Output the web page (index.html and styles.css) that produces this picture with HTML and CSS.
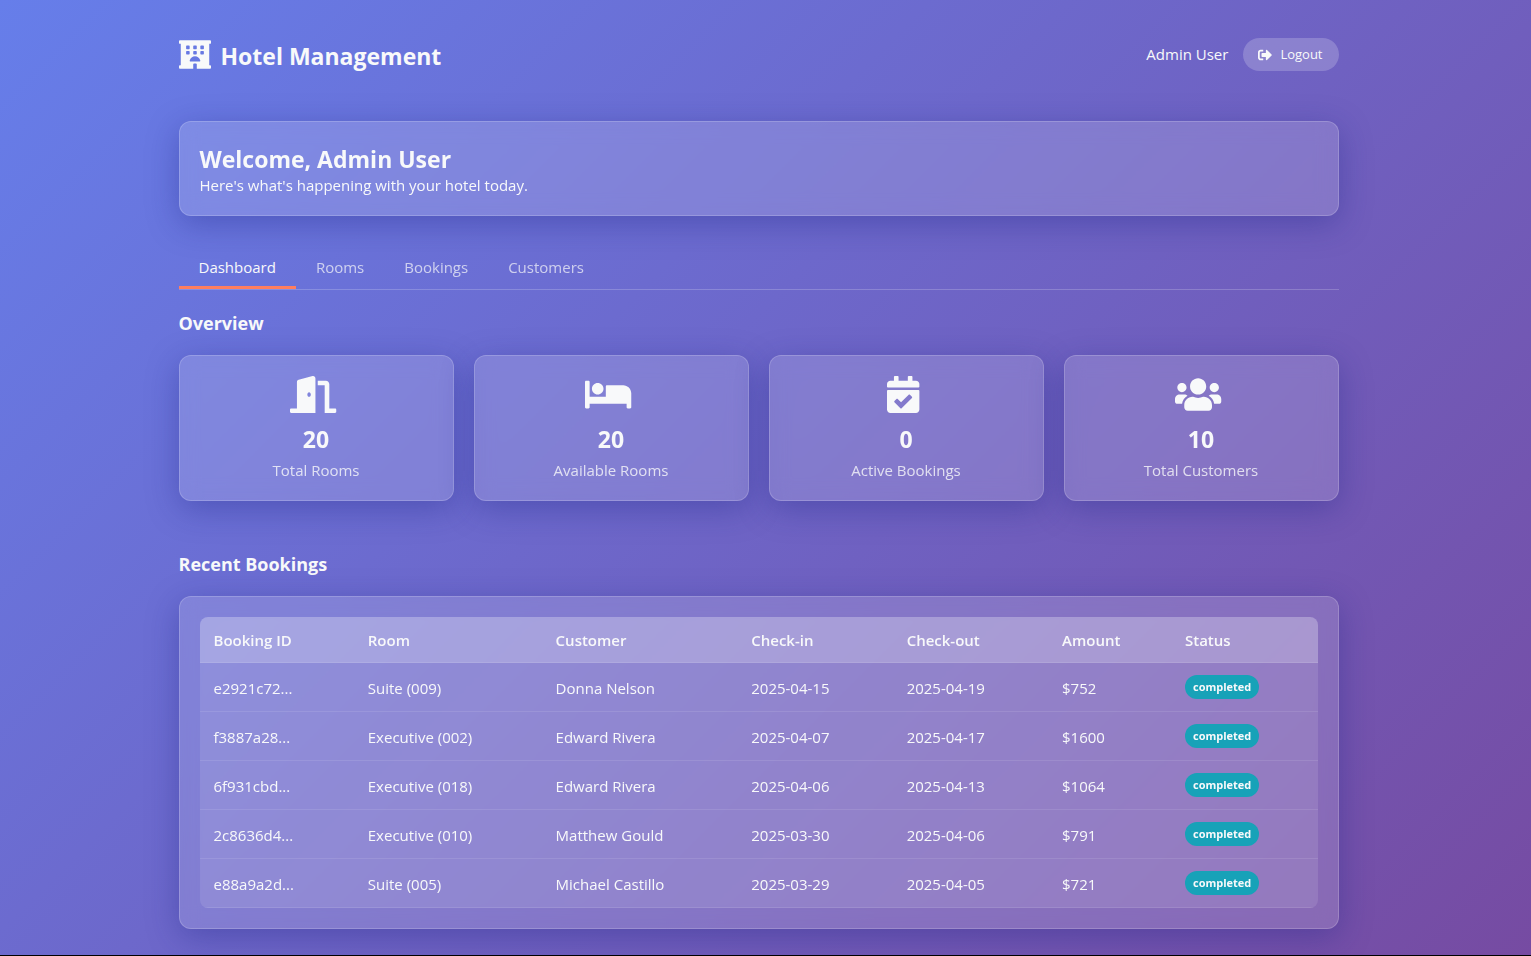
FILE: index.html
```
<!DOCTYPE html>
<html lang="en">
<head>
	<meta charset="UTF-8">
	<meta name="viewport" content="width=device-width, initial-scale=1.0">
	<title>Hotel Management</title>
	<link rel="stylesheet" href="styles.css">
</head>
<body>
<div class="container">
	<header class="header">
		<div class="logo">
			<svg viewBox="0 0 576 512" aria-hidden="true"><path fill-rule="evenodd" d="M560 64c8.84 0 16-7.16 16-16V16c0-8.84-7.16-16-16-16H16C7.16 0 0 7.16 0 16v32c0 8.84 7.16 16 16 16h16v384H16c-8.84 0-16 7.16-16 16v32c0 8.84 7.16 16 16 16h240v-80c0-8.8 7.2-16 16-16h32c8.8 0 16 7.2 16 16v80h240c8.84 0 16-7.16 16-16v-32c0-8.84-7.16-16-16-16h-16V64h16zM141 96h38q13 0 13 13v38q0 13-13 13h-38q-13 0-13-13v-38q0-13 13-13zM269 96h38q13 0 13 13v38q0 13-13 13h-38q-13 0-13-13v-38q0-13 13-13zM397 96h38q13 0 13 13v38q0 13-13 13h-38q-13 0-13-13v-38q0-13 13-13zM141 192h38q13 0 13 13v38q0 13-13 13h-38q-13 0-13-13v-38q0-13 13-13zM269 192h38q13 0 13 13v38q0 13-13 13h-38q-13 0-13-13v-38q0-13 13-13zM397 192h38q13 0 13 13v38q0 13-13 13h-38q-13 0-13-13v-38q0-13 13-13zM208 384c-10 0-18-9-15-19 11-44 50-77 95-77s84 33 95 77c3 10-5 19-15 19z"/></svg>
			<h1>Hotel Management</h1>
		</div>
		<div class="user-info">
			<span>Admin User</span>
			<button type="button" class="logout-btn">
				<svg viewBox="0 0 512 512" aria-hidden="true"><path d="M497 273L329 441c-15 15-41 4.5-41-17v-96H152c-13.3 0-24-10.7-24-24v-96c0-13.3 10.7-24 24-24h136V88c0-21.4 25.9-32 41-17l168 168c9.3 9.4 9.3 24.6 0 34zM192 436v-40c0-6.6-5.4-12-12-12H96c-17.7 0-32-14.3-32-32V160c0-17.7 14.3-32 32-32h84c6.6 0 12-5.4 12-12V76c0-6.6-5.4-12-12-12H96c-53 0-96 43-96 96v192c0 53 43 96 96 96h84c6.6 0 12-5.4 12-12z"/></svg>
				Logout
			</button>
		</div>
	</header>

	<section class="card welcome">
		<h2>Welcome, Admin User</h2>
		<p>Here's what's happening with your hotel today.</p>
	</section>

	<nav class="tabs">
		<button type="button" class="tab active">Dashboard</button>
		<button type="button" class="tab">Rooms</button>
		<button type="button" class="tab">Bookings</button>
		<button type="button" class="tab">Customers</button>
	</nav>

	<h3 class="section-title">Overview</h3>
	<div class="stats">
		<div class="card stat">
			<svg class="stat-icon" viewBox="0 0 640 512" aria-hidden="true"><path d="M624 448h-80V113.45C544 86.19 522.47 64 496 64H384v64h96v384h144c8.84 0 16-7.16 16-16v-32c0-8.84-7.16-16-16-16zM312.24 1.01l-192 49.74C105.99 54.44 96 67.7 96 82.92V448H16c-8.84 0-16 7.16-16 16v32c0 8.84 7.16 16 16 16h336V33.18c0-21.58-19.56-37.41-39.76-32.17zM264 288c-13.25 0-24-14.33-24-32s10.75-32 24-32 24 14.33 24 32-10.75 32-24 32z"/></svg>
			<div class="stat-value">20</div>
			<div class="stat-label">Total Rooms</div>
		</div>
		<div class="card stat">
			<svg class="stat-icon" viewBox="0 0 640 512" aria-hidden="true"><path d="M176 256c44.11 0 80-35.89 80-80s-35.89-80-80-80-80 35.89-80 80 35.89 80 80 80zm352-128H304c-8.84 0-16 7.16-16 16v144H64V80c0-8.84-7.16-16-16-16H16C7.16 64 0 71.16 0 80v352c0 8.84 7.16 16 16 16h32c8.84 0 16-7.16 16-16v-48h512v48c0 8.84 7.16 16 16 16h32c8.84 0 16-7.16 16-16V240c0-61.86-50.14-112-112-112z"/></svg>
			<div class="stat-value">20</div>
			<div class="stat-label">Available Rooms</div>
		</div>
		<div class="card stat">
			<svg class="stat-icon" viewBox="0 0 448 512" aria-hidden="true"><path d="M436 160H12c-6.627 0-12-5.373-12-12v-36c0-26.51 21.49-48 48-48h48V12c0-6.627 5.373-12 12-12h40c6.627 0 12 5.373 12 12v52h128V12c0-6.627 5.373-12 12-12h40c6.627 0 12 5.373 12 12v52h48c26.51 0 48 21.49 48 48v36c0 6.627-5.373 12-12 12zM12 192h424c6.627 0 12 5.373 12 12v260c0 26.51-21.49 48-48 48H48c-26.51 0-48-21.49-48-48V204c0-6.627 5.373-12 12-12zm333.296 95.947l-28.169-28.398c-4.667-4.705-12.265-4.736-16.97-.068L194.12 364.665l-45.98-46.352c-4.667-4.705-12.266-4.736-16.971-.068l-28.397 28.17c-4.705 4.667-4.736 12.265-.068 16.97l82.601 83.269c4.667 4.705 12.265 4.736 16.97.068l142.953-141.805c4.705-4.667 4.736-12.265.068-16.97z"/></svg>
			<div class="stat-value">0</div>
			<div class="stat-label">Active Bookings</div>
		</div>
		<div class="card stat">
			<svg class="stat-icon" viewBox="0 0 640 512" aria-hidden="true"><path d="M96 224c35.3 0 64-28.7 64-64s-28.7-64-64-64-64 28.7-64 64 28.7 64 64 64zm448 0c35.3 0 64-28.7 64-64s-28.7-64-64-64-64 28.7-64 64 28.7 64 64 64zm32 32h-64c-17.6 0-33.5 7.1-45.1 18.6 40.3 22.1 68.9 62 75.1 109.4h66c17.7 0 32-14.3 32-32v-32c0-35.3-28.7-64-64-64zm-256 0c61.9 0 112-50.1 112-112S381.9 32 320 32 208 82.1 208 144s50.1 112 112 112zm76.8 32h-8.3c-20.8 10-43.9 16-68.5 16s-47.6-6-68.5-16h-8.3C179.6 288 128 339.6 128 403.2V432c0 26.5 21.5 48 48 48h288c26.5 0 48-21.5 48-48v-28.8c0-63.6-51.6-115.2-115.2-115.2zm-223.7-13.4C161.5 263.1 145.6 256 128 256H64c-35.3 0-64 28.7-64 64v32c0 17.7 14.3 32 32 32h65.9c6.3-47.4 34.9-87.3 75.2-109.4z"/></svg>
			<div class="stat-value">10</div>
			<div class="stat-label">Total Customers</div>
		</div>
	</div>

	<h3 class="section-title">Recent Bookings</h3>
	<div class="card">
		<table class="bookings">
			<colgroup>
				<col class="col-id">
				<col class="col-room">
				<col class="col-customer">
				<col class="col-date">
				<col class="col-date">
				<col class="col-amount">
				<col>
			</colgroup>
			<thead>
				<tr><th>Booking ID</th><th>Room</th><th>Customer</th><th>Check-in</th><th>Check-out</th><th>Amount</th><th>Status</th></tr>
			</thead>
			<tbody>
				<tr><td>e2921c72...</td><td>Suite (009)</td><td>Donna Nelson</td><td>2025-04-15</td><td>2025-04-19</td><td>$752</td><td class="status"><span class="badge">completed</span></td></tr>
				<tr><td>f3887a28...</td><td>Executive (002)</td><td>Edward Rivera</td><td>2025-04-07</td><td>2025-04-17</td><td>$1600</td><td class="status"><span class="badge">completed</span></td></tr>
				<tr><td>6f931cbd...</td><td>Executive (018)</td><td>Edward Rivera</td><td>2025-04-06</td><td>2025-04-13</td><td>$1064</td><td class="status"><span class="badge">completed</span></td></tr>
				<tr><td>2c8636d4...</td><td>Executive (010)</td><td>Matthew Gould</td><td>2025-03-30</td><td>2025-04-06</td><td>$791</td><td class="status"><span class="badge">completed</span></td></tr>
				<tr><td>e88a9a2d...</td><td>Suite (005)</td><td>Michael Castillo</td><td>2025-03-29</td><td>2025-04-05</td><td>$721</td><td class="status"><span class="badge">completed</span></td></tr>
			</tbody>
		</table>
	</div>
</div>
</body>
</html>
```
FILE: styles.css
```
* {
	margin: 0;
	padding: 0;
	box-sizing: border-box;
}

html {
	background: #000;
}

body {
	font-family: "Segoe UI", "Open Sans", "Noto Sans", sans-serif;
	font-size: 15px;
	line-height: 21px;
	color: #f8f9fa;
	min-height: 100vh;
	padding-right: 14px;
	border-bottom: 1px solid #000;
	background: linear-gradient(135deg, #667eea 0%, #764ba2 100%) padding-box;
}

button {
	font-family: inherit;
	color: inherit;
	border: none;
	background: none;
	cursor: pointer;
}

svg {
	fill: currentColor;
}

.container {
	max-width: 1200px;
	margin: 0 auto;
	padding: 20px 20px 26px;
}

/* header */
.header {
	display: flex;
	justify-content: space-between;
	align-items: center;
	padding: 16px 0;
	margin-bottom: 32px;
}

.logo {
	display: flex;
	align-items: center;
	gap: 10px;
}

.logo svg {
	width: 32px;
	height: 29px;
}

.logo h1 {
	font-size: 23px;
	line-height: 33px;
	padding-top: 4px;
}

.user-info {
	display: flex;
	align-items: center;
	gap: 15px;
}

.logout-btn {
	display: flex;
	align-items: center;
	gap: 8px;
	padding: 6px 16px 6px 15px;
	border-radius: 20px;
	font-size: 13px;
	line-height: 21px;
	background: rgba(255, 255, 255, 0.2);
}

.logout-btn svg {
	width: 14px;
	height: 14px;
}

/* cards */
.card {
	padding: 20px;
	border: 1px solid rgba(255, 255, 255, 0.18);
	border-radius: 12px;
	background: rgba(255, 255, 255, 0.15);
	box-shadow: 0 8px 32px rgba(31, 38, 135, 0.37);
	backdrop-filter: blur(10px);
}

.welcome {
	padding: 21px 20px 19px;
	margin-bottom: 30px;
}

.welcome h2 {
	font-size: 23px;
	line-height: 32px;
}

/* tabs */
.tabs {
	display: flex;
	border-bottom: 1px solid rgba(255, 255, 255, 0.2);
	margin-bottom: 20px;
}

.tab {
	padding: 11px 20px 9px;
	font-size: 15px;
	line-height: 20px;
	opacity: 0.7;
	border-bottom: 3px solid transparent;
}

.tab.active {
	opacity: 1;
	border-bottom-color: #ff7e5f;
}

.section-title {
	font-size: 18px;
	line-height: 27px;
	margin-bottom: 18px;
}

/* overview */
.stats {
	display: grid;
	grid-template-columns: repeat(4, 1fr);
	gap: 20px;
	margin-bottom: 50px;
}

.stat {
	display: flex;
	flex-direction: column;
	align-items: center;
	padding-bottom: 19px;
}

.stat-icon {
	height: 37px;
	margin: 0 5px 10px 0;
}

.stat-value {
	font-size: 23px;
	font-weight: bold;
	line-height: 32px;
	margin-bottom: 5px;
}

.stat-label {
	opacity: 0.8;
}

/* bookings table */
.bookings {
	width: 100%;
	table-layout: fixed;
	border-collapse: separate;
	border-spacing: 0;
	border-radius: 8px;
	overflow: hidden;
	background: rgba(255, 255, 255, 0.1);
}

.bookings th,
.bookings td {
	padding: 13px 14px 11px;
	text-align: left;
	border-bottom: 1px solid rgba(255, 255, 255, 0.1);
}

.bookings th {
	font-weight: 600;
	background: rgba(255, 255, 255, 0.2);
}

.bookings td {
	line-height: 24px;
}

.bookings .status {
	padding: 12px 14px;
}

.col-id { width: 13.8%; }
.col-room { width: 16.8%; }
.col-customer { width: 17.5%; }
.col-date { width: 13.9%; }
.col-amount { width: 11%; }

.badge {
	display: inline-block;
	vertical-align: top;
	padding: 0 8px;
	border-radius: 12px;
	font-size: 11px;
	font-weight: bold;
	background: #17a2b8;
}
```
